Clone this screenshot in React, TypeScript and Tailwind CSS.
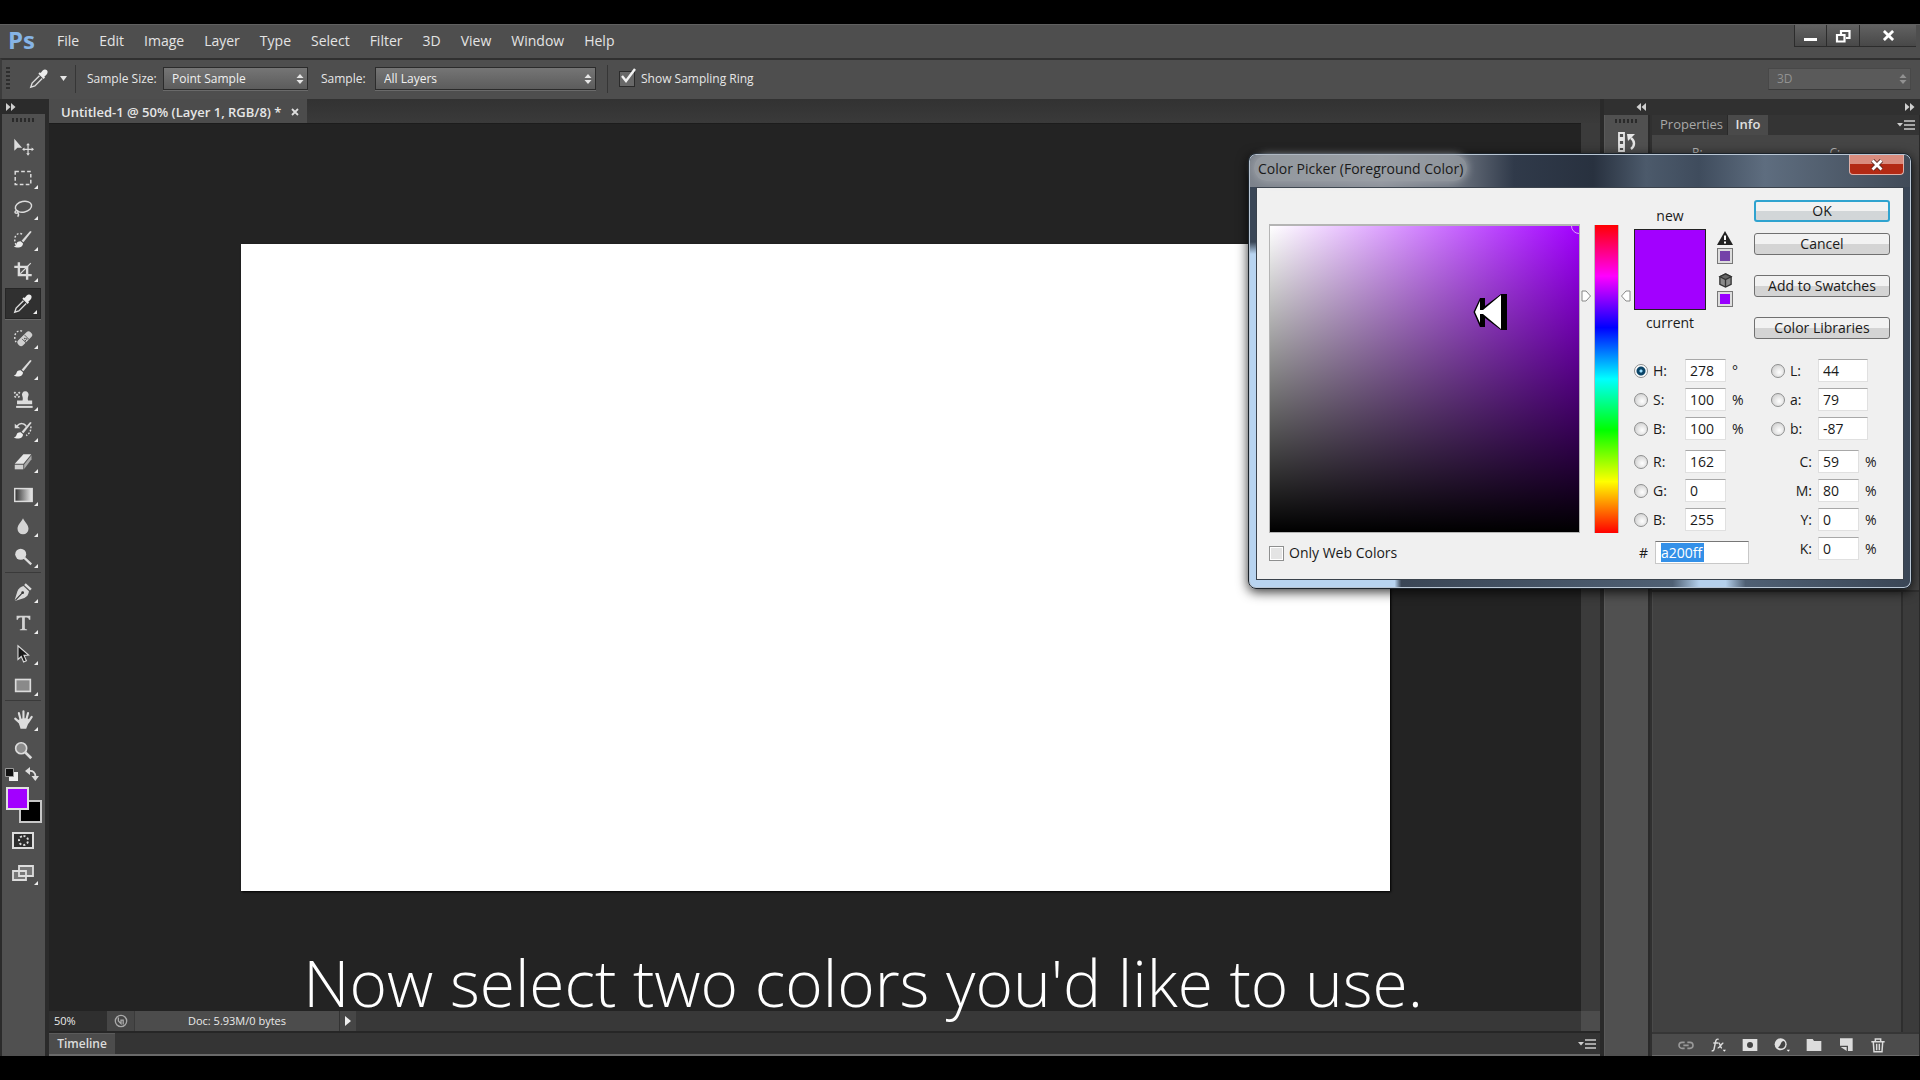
import React from "react";

const UI = "font-['Open_Sans','Noto_Sans',sans-serif]";

const MENUS = ["File", "Edit", "Image", "Layer", "Type", "Select", "Filter", "3D", "View", "Window", "Help"];

type IconProps = { children: React.ReactNode; size?: string };

function Icon({ children, size = "size-6" }: IconProps) {
  return (
    <svg viewBox="0 0 24 24" className={`${size} shrink-0`} fill="none" stroke="#dcdcdc" strokeWidth="1.6" aria-hidden="true">
      {children}
    </svg>
  );
}

const eyedropper = (
  <>
    <path d="M12.5 8.5 4.5 16.500 3 21l4.500-1.500L15.500 11.500" strokeWidth="1.500" />
    <path d="M16 2.800c1.600-1.600 3.600-1.300 4.600-.3s1.200 2.900-.3 4.500L17.800 9.500l.8.9-1.600 1.600L11.300 6.300l1.600-1.600.9.8z" fill="#ececec" stroke="none" />
  </>
);

const brushTip = (
  <>
    <path d="M21.500 3 12.500 14.500 10.500 12.800 19.800 2.300z" fill="#dcdcdc" stroke="none" />
    <path d="M9.700 13.500 11.900 15.600c.4 3-2.400 4.700-5.400 4.700-1.900 0-3.300-.6-4.500-1.300 2.400-.4 2.400-1.600 3.200-3.500.7-1.600 2.700-2.400 4.500-2z" fill="#ececec" stroke="none" />
  </>
);

type Tool = { name: string; icon: React.ReactNode; flyout?: boolean; active?: boolean; rule?: boolean; drop?: boolean };

const TOOLS: Tool[] = [
  {
    name: "Move tool",
    icon: (
      <>
        <path d="M2.500 3v13l3.400-3.200h5.100z" fill="#dcdcdc" stroke="none" />
        <path d="M17.500 9v11M12 14.500h11" strokeWidth="1.300" />
        <path d="m17.500 7.500 2 2.600h-4zM17.500 21.500l2-2.600h-4zM11 14.500l2.600-2v4zM24 14.500l-2.600-2v4z" fill="#dcdcdc" stroke="none" />
      </>
    ),
  },
  { name: "Rectangular marquee tool", flyout: true, icon: <rect x="3.500" y="5" width="17" height="14" strokeDasharray="4 2.500" /> },
  {
    name: "Lasso tool",
    flyout: true,
    icon: (
      <>
        <ellipse cx="12.500" cy="9.500" rx="9" ry="5.800" transform="rotate(-12 12.500 9.500)" />
        <path d="M5 13.500c-2 .8-2.300 2.800-.5 3 2 .2 3-1.700 1-3M6.500 16c1 1.500.8 3-.3 4.500" />
      </>
    ),
  },
  {
    name: "Quick selection tool",
    flyout: true,
    icon: (
      <>
        <path d="M11 5.500C7 3.500 3 6.500 3 11.500c0 3 1 5 2 6.500" strokeDasharray="2 2" />
        <g>{brushTip}</g>
      </>
    ),
  },
  {
    name: "Crop tool",
    flyout: true,
    icon: (
      <>
        <path d="M7.500 2.500v14h14M2.500 7.500h14v14" strokeWidth="2.600" />
        <path d="M9 15 20.500 3.500" strokeWidth="1.200" />
      </>
    ),
  },
  { name: "Eyedropper tool", flyout: true, active: true, icon: eyedropper },
  {
    name: "Spot healing brush tool",
    flyout: true,
    icon: (
      <>
        <path d="M11 4.500C7 3 3 6 3 11c0 2 .5 4 1.500 5.500" strokeDasharray="2 2" />
        <rect x="4.500" y="9" width="19" height="7.500" rx="3.200" transform="rotate(-45 14 12.800)" fill="#cfcfcf" stroke="none" />
        <path d="m11 13 5 5M13.500 8.500l5.500 5.500" stroke="#555" strokeWidth="1" />
        <path d="M14 12.500h.1M16 13h.1M14.500 15h.1" stroke="#444" strokeWidth="1.600" strokeLinecap="round" />
      </>
    ),
  },
  { name: "Brush tool", flyout: true, icon: brushTip },
  {
    name: "Clone stamp tool",
    flyout: true,
    icon: (
      <>
        <path d="M14.500 2.500a3.600 3.600 0 0 1 3.400 4.900c-.8 1.700-.9 3.600-.4 5.100h4.500v4H5.500v-4h6c.5-1.500.4-3.400-.4-5.100A3.600 3.600 0 0 1 14.500 2.500z" fill="#dcdcdc" stroke="none" />
        <path d="M4.500 19.500h18" strokeWidth="2.200" />
        <path d="m2.500 3.500 6 6M8.500 3.500l-6 6" strokeDasharray="1.800 1.300" strokeWidth="2" />
      </>
    ),
  },
  {
    name: "History brush tool",
    flyout: true,
    icon: (
      <>
        <path d="M5.500 6.500c3-3.500 8-3.500 10 .5" />
        <path d="M3 4v5h6z" fill="#dcdcdc" stroke="none" />
        <path d="M20.500 7c.7 4-1.500 8-5 10" strokeDasharray="2 1.500" />
        {brushTip}
      </>
    ),
  },
  {
    name: "Eraser tool",
    flyout: true,
    icon: (
      <>
        <path d="m3 14 9.500-10.500H21L12.500 14z" fill="#e6e6e6" stroke="none" />
        <path d="M3 15h9.300v5H3z" fill="#cfcfcf" stroke="none" />
        <path d="m13.300 14.600 8-10V9l-8 10.500z" fill="#a8a8a8" stroke="none" />
      </>
    ),
  },
  {
    name: "Gradient tool",
    flyout: true,
    drop: true,
    icon: (
      <>
        <defs>
          <linearGradient id="tool-gradient">
            <stop stopColor="#2e2e2e" />
            <stop offset="1" stopColor="#eee" />
          </linearGradient>
        </defs>
        <rect x="3" y="5" width="19" height="14" fill="url(#tool-gradient)" />
      </>
    ),
  },
  { name: "Blur tool", flyout: true, icon: <path d="M12 3.500c1.500 3.500 6 7 6 11.500a6 6 0 0 1-12 0c0-4.500 4.500-8 6-11.500z" fill="#d4d4d4" stroke="none" /> },
  {
    name: "Dodge tool",
    flyout: true,
    icon: (
      <>
        <circle cx="9.500" cy="9" r="6" fill="#dcdcdc" stroke="none" />
        <path d="m13.500 13 7.500 7" strokeWidth="2.400" />
      </>
    ),
  },
  {
    name: "Pen tool",
    flyout: true,
    rule: true,
    icon: (
      <>
        <path d="m15 2.500 6.500 6-1.800 1.800-6.500-6z" fill="#dcdcdc" stroke="none" />
        <path d="m12.500 5.500 6 5.600c-.3 3-2 5.900-5 7.400L4 21.500 3 20.500 6 11c1.300-3 3.500-4.900 6.500-5.500z" fill="#d8d8d8" stroke="none" />
        <path d="m3.800 20.800 7-7.300" stroke="#333" strokeWidth="1.200" />
        <circle cx="11.600" cy="12.700" r="1.500" fill="#333" stroke="none" />
      </>
    ),
  },
  {
    name: "Type tool",
    flyout: true,
    icon: <path d="M5 4h15v4.500h-1.500C18.200 6.500 17.500 6 14 6v11.500c0 1.200.8 1.500 2.500 1.500v1h-8v-1c1.700 0 2.500-.3 2.500-1.500V6C7.500 6 6.800 6.500 6.500 8.500H5z" fill="#d4d4d4" stroke="none" />,
  },
  {
    name: "Path selection tool",
    flyout: true,
    icon: <path d="M6.500 3v15l3.600-3.300 2.600 6 3-1.300-2.600-5.900 5-.3z" fill="#191919" strokeWidth="1.200" />,
  },
  { name: "Rectangle tool", flyout: true, icon: <rect x="4" y="6" width="16" height="13" fill="#8a8a8a" strokeWidth="1.800" /> },
  {
    name: "Hand tool",
    flyout: true,
    rule: true,
    icon: (
      <>
        <path d="M7.500 14 3.500 10.500M9.500 12 7.500 4.500M12.500 11V2.500M15.500 12l2-7.500M17.500 14.500l4-6" strokeWidth="2.300" strokeLinecap="round" />
        <path d="M6 12.500c2-2 9-3.500 12.500-1.500-.3 4.500-1.500 7-3 10.500H9.300C8.600 18 7 15 6 12.500z" fill="#dcdcdc" stroke="none" />
      </>
    ),
  },
  {
    name: "Zoom tool",
    icon: (
      <>
        <circle cx="10" cy="9" r="6" fill="#8b8b8b" strokeWidth="1.800" />
        <path d="m14.500 13.500 6.500 6.500" strokeWidth="3" />
      </>
    ),
  },
];

function UpDown({ className = "fill-[#e6e6e6]" }: { className?: string }) {
  return (
    <svg viewBox="0 0 8 12" className={`pointer-events-none absolute top-1/2 right-1 h-3 w-2 -translate-y-1/2 ${className}`} aria-hidden="true">
      <path d="M4 1 7.500 5h-7zM4 11 .5 7h7z" />
    </svg>
  );
}

function Grip() {
  return <div className="h-1 w-6 bg-[repeating-linear-gradient(90deg,#2a2a2a_0_2px,#4f4f4f_2px_4px)]" />;
}

function Chevrons({ left = false }: { left?: boolean }) {
  return (
    <svg viewBox="0 0 10 8" className={left ? "h-2 w-2.5 rotate-180 fill-[#d0d0d0]" : "h-2 w-2.5 fill-[#d0d0d0]"} aria-hidden="true">
      <path d="M0 0l4.500 4L0 8zM5 0l4.500 4L5 8z" />
    </svg>
  );
}

function PanelMenu() {
  return (
    <svg viewBox="0 0 18 12" className="h-3 w-[18px]" aria-hidden="true">
      <path d="M0 4h6L3 7.500z" fill="#ccc" />
      <path d="M7 2h11M7 6h11M7 10h11" stroke="#ccc" strokeWidth="1.500" />
    </svg>
  );
}

function MenuBar() {
  return (
    <header className="flex h-[34px] items-stretch border-t border-[#606060] bg-[#4e4e4e] text-sm text-[#e4e4e4]">
      <span className="flex w-[47px] items-center pb-1 pl-2 text-2xl leading-none font-bold text-[#86b4e6]">Ps</span>
      <nav className="flex items-center pb-0.5">
        {MENUS.map((m) => (
          <button key={m} type="button" className="px-[10px] leading-5">
            {m}
          </button>
        ))}
      </nav>
      <div className="mr-1 ml-auto flex h-[22px] border-b border-l border-[#2c2c2c] bg-gradient-to-b from-[#626262] to-[#484848]">
        <button type="button" aria-label="Minimize" className="flex w-8 justify-center border-r border-[#2c2c2c]">
          <span className="mt-[13px] h-[3px] w-[13px] bg-white" />
        </button>
        <button type="button" aria-label="Restore" className="flex w-[33px] items-center justify-center border-r border-[#2c2c2c]">
          <svg viewBox="0 0 16 14" className="h-[14px] w-4" fill="none" stroke="#fff" strokeWidth="2.200" aria-hidden="true">
            <path d="M6 5V2h8.500v7H11" />
            <path d="M2 6h7.500v6.500H2z" />
          </svg>
        </button>
        <button type="button" aria-label="Close" className="flex w-[56px] items-center justify-center">
          <svg viewBox="0 0 14 12" className="h-[11px] w-[13px]" stroke="#fff" strokeWidth="3" aria-hidden="true">
            <path d="m2 1 10 10M12 1 2 11" />
          </svg>
        </button>
      </div>
    </header>
  );
}

const selectBox =
  "h-[23px] w-full appearance-none border border-[#2b2b2b] bg-gradient-to-b from-[#757575] to-[#5c5c5c] pl-2 text-xs text-[#f0f0f0] shadow-[0_1px_0_#6a6a6a]";

function OptionsBar() {
  return (
    <div className="flex h-[41px] items-center border-t-2 border-l-2 border-t-[#303030] border-l-[#3c3c3c] bg-[#4e4e4e] pb-0.5 text-xs text-[#e6e6e6]">
      <div className="ml-1 h-6 w-1 bg-[repeating-linear-gradient(180deg,#2e2e2e_0_2px,#4f4f4f_2px_4px)]" />
      <button type="button" aria-label="Eyedropper presets" className="ml-[18px] flex items-center gap-[10px]">
        <Icon size="size-[22px]">{eyedropper}</Icon>
        <svg viewBox="0 0 7 5" className="h-[5px] w-[7px] fill-[#e6e6e6]" aria-hidden="true">
          <path d="M0 0h7L3.500 5z" />
        </svg>
      </button>
      <div className="mx-2 h-7 w-px bg-[#363636]" />
      <label htmlFor="sample-size" className="ml-[3px] w-[76px]">
        Sample Size:
      </label>
      <div className="relative w-[145px]">
        <select id="sample-size" className={selectBox}>
          <option>Point Sample</option>
        </select>
        <UpDown />
      </div>
      <label htmlFor="sample-layers" className="ml-[13px] w-[54px]">
        Sample:
      </label>
      <div className="relative w-[221px]">
        <select id="sample-layers" className={selectBox}>
          <option>All Layers</option>
        </select>
        <UpDown />
      </div>
      <div className="mx-[11px] h-7 w-px bg-[#363636]" />
      <label className="flex items-center gap-[6px]">
        <span className="relative flex size-4">
          <input type="checkbox" defaultChecked className="size-4 appearance-none border border-[#2b2b2b] bg-[#686868]" />
          <svg viewBox="0 0 18 18" className="pointer-events-none absolute -top-1 left-0 size-[18px]" fill="none" stroke="#f2f2f2" strokeWidth="2.400" aria-hidden="true">
            <path d="m3 9 4 5 9-12" />
          </svg>
        </span>
        Show Sampling Ring
      </label>
      <div className="relative mr-[9px] ml-auto w-[143px]">
        <select aria-label="Workspace" disabled className="h-[22px] w-full appearance-none border border-[#484848] border-b-[#3a3a3a] bg-[#5a5a5a] pl-2 text-xs text-[#929292] opacity-100">
          <option>3D</option>
        </select>
        <UpDown className="fill-[#929292]" />
      </div>
    </div>
  );
}

function ToolBar() {
  return (
    <aside className="flex w-[49px] shrink-0 flex-col border-r-4 border-l-2 border-r-[#2b2b2b] border-l-[#2b2b2b] bg-[#505050]">
      <div className="flex h-[15px] items-center bg-[#2b2b2b] pl-1">
        <Chevrons />
      </div>
      <div className="flex justify-center pt-1 pb-[9px]">
        <Grip />
      </div>
      <div className="flex flex-col pr-1 pl-[3px]">
        {TOOLS.map((t) => (
          <React.Fragment key={t.name}>
            {t.rule && <div className="mb-[3px] h-px bg-[#3a3a3a]" />}
            <button
              type="button"
              aria-label={t.name}
              aria-pressed={!!t.active}
              className={
                t.active
                  ? "relative mt-0.5 mb-[3px] flex h-[31px] items-center justify-center border border-[#262626] bg-[#303030] shadow-[0_1px_0_#6a6a6a]"
                  : t.drop
                    ? "relative mt-0.5 flex h-[31px] items-center justify-center"
                    : "relative flex h-[31px] items-center justify-center"
              }
            >
              <Icon size="size-[22px]">{t.icon}</Icon>
              {t.flyout && (
                <svg viewBox="0 0 4 4" className="absolute right-[3px] bottom-1 size-1 fill-[#eee]" aria-hidden="true">
                  <path d="M4 0v4H0z" />
                </svg>
              )}
            </button>
          </React.Fragment>
        ))}
      </div>
      <div className="mt-px flex items-center justify-between px-[3px] pr-[6px]">
        <button type="button" aria-label="Default colors" className="flex">
          <svg viewBox="0 0 13 13" className="size-[13px]" aria-hidden="true">
            <path d="M4 4h9v9H4z" fill="#eee" />
            <path d="M.5.500h8v8h-8z" fill="#111" stroke="#999" />
          </svg>
        </button>
        <button type="button" aria-label="Switch colors" className="flex">
          <svg viewBox="0 0 14 14" className="size-[14px]" fill="none" stroke="#ddd" strokeWidth="1.800" aria-hidden="true">
            <path d="M4 4c4-.5 6.500 1.500 6.500 6" />
            <path d="M5 0v8L0 4zM6.500 9h7.500l-3.700 5z" fill="#ddd" stroke="none" />
          </svg>
        </button>
      </div>
      <div className="relative mt-[6px] ml-1 h-9 w-9">
        <button type="button" aria-label="Background color" className="absolute right-0 bottom-0 size-[23px] border-2 border-[#c8c8c8] bg-black" />
        <button type="button" aria-label="Foreground color" className="absolute top-0 left-0 size-[23px] border-2 border-[#e0e0e0] bg-[#a200ff]" />
      </div>
      <button type="button" aria-label="Quick mask mode" className="mt-[9px] ml-[10px] flex h-[17px] w-[22px] items-center justify-center border-2 border-[#ddd] bg-[#2e2e2e]">
        <span className="size-[11px] rounded-full border-2 border-dotted border-[#ddd]" />
      </button>
      <button type="button" aria-label="Screen mode" className="relative mt-[13px] ml-[10px] flex h-6 w-[26px]">
        <svg viewBox="0 0 26 24" className="h-6 w-[26px]" fill="#777" stroke="#ddd" strokeWidth="1.800" aria-hidden="true">
          <path d="M1 9h13v9H1zM7 4h14v10H7z" />
          <path d="M26 19v4h-4z" fill="#eee" stroke="none" />
        </svg>
      </button>
    </aside>
  );
}

function DocumentArea() {
  return (
    <main className="flex min-w-0 flex-1 flex-col">
      <div className="flex h-6 bg-gradient-to-b from-[#323232] to-[#3a3a3a]">
        <div className="flex items-center gap-[10px] bg-[#4c4c4c] pt-0.5 pr-2 pl-3 text-[13px] leading-none font-semibold text-[#e6e6e6]">
          <span>Untitled-1 @ 50% (Layer 1, RGB/8) *</span>
          <button type="button" aria-label="Close document" className="flex">
            <svg viewBox="0 0 8 8" className="size-2" stroke="#ddd" strokeWidth="1.800" aria-hidden="true">
              <path d="m1 1 6 6M7 1 1 7" />
            </svg>
          </button>
        </div>
      </div>
      <div className="flex flex-1">
        <div className="flex flex-1 items-center justify-center border-t border-[#1c1c1c] bg-[#232323]">
          <div className="aspect-video w-3/4 bg-white shadow-[1px_1px_2px_#000]" />
        </div>
        <div className="w-[19px] bg-[#3b3b3b]" />
      </div>
      <div className="flex h-5 items-stretch bg-[#383838] text-[11px] text-[#eaeaea]">
        <div className="flex w-[58px] items-center bg-[#2f2f2f] pl-[5px]">50%</div>
        <div className="flex w-7 items-center justify-center border-r border-[#3a3a3a] bg-[#464646]">
          <svg viewBox="0 0 16 16" className="size-[14px]" fill="none" stroke="#aaa" strokeWidth="1.500" aria-hidden="true">
            <circle cx="8" cy="8" r="6.500" />
            <path d="M5 4v4l3 3V7h2.500v5" />
          </svg>
        </div>
        <div className="flex w-[205px] items-center justify-center border-r border-[#333] bg-[#4c4c4c]">Doc: 5.93M/0 bytes</div>
        <button type="button" aria-label="Status menu" className="flex w-4 items-center justify-center bg-[#464646]">
          <svg viewBox="0 0 6 10" className="h-[10px] w-[6px] fill-[#eee]" aria-hidden="true">
            <path d="M0 0v10l6-5z" />
          </svg>
        </button>
        <div className="ml-auto w-[19px] bg-[#4c4c4c]" />
      </div>
      <div className="flex h-[25px] items-stretch border-t-2 border-b-2 border-t-[#262626] border-b-[#6a6a6a] bg-[#343434]">
        <div className="flex w-[66px] items-center justify-center border-t border-[#5a5a5a] bg-[#4c4c4c] text-xs font-semibold text-[#dcdcdc]">Timeline</div>
        <button type="button" aria-label="Timeline menu" className="mr-1 ml-auto flex items-center">
          <PanelMenu />
        </button>
      </div>
    </main>
  );
}

const LAYER_ACTIONS: { name: string; icon: React.ReactNode }[] = [
  {
    name: "Link layers",
    icon: <path d="M10 17H6a4.500 4.500 0 0 1 0-9h4M14 8h4a4.500 4.500 0 0 1 0 9h-4M8 12.500h8" stroke="#999" strokeWidth="2.400" />,
  },
  {
    name: "Layer style",
    icon: (
      <>
        <path d="M13 3.500c-3-1-4 .5-4.500 3L6 18.500c-.4 1.800-1.500 2.500-3.500 2M5 9h7M12.500 9c2 0 2 .8 2.700 3.500.8 3 1 4 2.800 4.200M20 9c-3 .5-5 7.700-8.500 7.700" strokeWidth="2.200" />
        <path d="M19 19h5l-2.500 3z" fill="#eee" stroke="none" />
      </>
    ),
  },
  {
    name: "Layer mask",
    icon: (
      <>
        <path d="M1 3h22v18H1z" fill="#e0e0e0" stroke="none" />
        <circle cx="12" cy="12" r="4.500" fill="#444" stroke="none" />
      </>
    ),
  },
  {
    name: "Adjustment layer",
    icon: (
      <>
        <circle cx="10" cy="11" r="9" fill="#e0e0e0" stroke="none" />
        <path d="M15 6c-6 0-3 6-9 9.500A6 6 0 0 0 15 6z" fill="#444" stroke="none" />
        <path d="M19 19h5l-2.500 3z" fill="#eee" stroke="none" />
      </>
    ),
  },
  { name: "New group", icon: <path d="M1 3h9l2 3h11v15H1z" fill="#dcdcdc" stroke="none" /> },
  { name: "New layer", icon: <path d="M3 2h19v19h-7v-8H3z M4 15h9v6z" fill="#dcdcdc" stroke="none" /> },
  {
    name: "Delete layer",
    icon: <path d="M2 7h20M8 6V3h8v3M5 8l1 14h12l1-14M10 10v10M14 10v10" strokeWidth="2.200" />,
  },
];

function Dock() {
  return (
    <div className="flex w-80 shrink-0 flex-col border-l-4 border-l-[#2a2a2a]">
      <div className="flex h-4 items-center justify-between bg-[#303030] pr-[5px] pl-8">
        <Chevrons left />
        <Chevrons />
      </div>
      <div className="flex flex-1">
        <div className="flex w-[46px] flex-col items-center border-r-2 border-l border-r-[#2a2a2a] border-l-[#5a5a5a] bg-[#505050] pt-1">
          <Grip />
          <button type="button" aria-label="History" className="mt-[9px] flex">
            <svg viewBox="0 0 18 20" className="h-5 w-[18px]" fill="none" stroke="#e6e6e6" strokeWidth="1.800" aria-hidden="true">
              <path d="M1 1h5v5H1zM1 8h5v5H1zM1 15h5v4H1z" />
              <path d="M13 6c4 3 4 8 0 11" strokeWidth="2.400" />
              <path d="M9 2h8l-7 7z" fill="#e6e6e6" stroke="none" />
            </svg>
          </button>
        </div>
        <div className="flex min-w-0 flex-1 flex-col border-r border-l-2 border-r-[#2a2a2a] border-l-[#303030]">
          <div className="flex h-5 items-stretch bg-[#343434] text-[13px]">
            <button type="button" className="w-[76px] border-r border-[#2a2a2a] pl-1 text-[#a8a8a8]">
              Properties
            </button>
            <button type="button" className="w-10 bg-[#4a4a4a] font-semibold text-[#e0e0e0]">
              Info
            </button>
            <button type="button" aria-label="Panel menu" className="mr-1 ml-auto flex items-center">
              <PanelMenu />
            </button>
          </div>
          <div className="flex h-[457px] border-b-2 border-[#303030] bg-[#454545] text-xs text-[#b4b4b4]">
            <span className="w-1/2 pt-[10px] pl-10">R:</span>
            <span className="w-1/2 pt-[10px] pl-11">C:</span>
          </div>
          <div className="flex flex-1">
            <div className="flex-1 border-l border-[#4a4a4a] bg-[#414141]" />
            <div className="w-[18px] border-l-2 border-[#2e2e2e] bg-[#3b3b3b]" />
          </div>
          <div className="flex h-[24px] items-center justify-end gap-4 border-t-2 border-b border-t-[#363636] border-b-[#6a6a6a] bg-[#4c4c4c] pr-[33px]">
            {LAYER_ACTIONS.map((a) => (
              <button key={a.name} type="button" aria-label={a.name} className="flex">
                <Icon size="size-4">{a.icon}</Icon>
              </button>
            ))}
          </div>
        </div>
      </div>
    </div>
  );
}

const fieldBox = "h-[23px] border border-[#e0e0e0] border-t-[#a8a8a8] bg-white pl-1 text-sm text-[#1a1a1a] outline-none";

type FieldProps = { id: string; label: string; value: string; unit?: string; radio?: boolean; checked?: boolean; wide?: boolean };

function Field({ id, label, value, unit, radio = true, checked, wide }: FieldProps) {
  return (
    <div className="flex h-[29px] items-center">
      {radio && (
        <input
          type="radio"
          name="channel"
          aria-label={`${label} channel`}
          defaultChecked={checked}
          className="mr-[5px] size-[14px] shrink-0 appearance-none rounded-full border border-[#8e8f8f] bg-[radial-gradient(circle_at_60%_60%,#fff,#c4c4c4)] checked:bg-[radial-gradient(circle,#9fe0ff_0_1px,#0b4568_2px_4px,#fff_5px)]"
        />
      )}
      <label htmlFor={id} className={radio ? (wide ? "w-7" : "w-8") : "w-[47px] pr-[6px] text-right"}>
        {label}:
      </label>
      <input id={id} defaultValue={value} className={`${fieldBox} ${wide ? "w-[50px]" : "w-[41px]"}`} />
      {unit && <span className="ml-[6px]">{unit}</span>}
    </div>
  );
}

function DialogButton({ children, primary }: { children: React.ReactNode; primary?: boolean }) {
  return (
    <button
      type="button"
      className={
        primary
          ? "h-[22px] rounded-[3px] border-2 border-[#2fa3cf] bg-gradient-to-b from-[#f2f2f2] from-50% to-[#d2d6d8] to-50% leading-none"
          : "h-[22px] rounded-[3px] border border-[#707070] bg-gradient-to-b from-[#f2f2f2] from-50% to-[#d4d4d4] to-50% leading-none"
      }
    >
      {children}
    </button>
  );
}

function ColorPicker() {
  return (
    <section
      role="dialog"
      aria-label="Color Picker"
      className="absolute top-[129px] right-2 w-[664px] rounded-lg border border-[#1b232b] bg-[linear-gradient(180deg,#3a4656_88px,transparent_100px),linear-gradient(90deg,#b8d4f0_22%,#3a4656_23%,#4f6074_64%,#b4d0ec_68%,#b4d0ec_72%,#4f6074_75%,#3a4656)] px-[7px] pb-2 text-sm text-[#1a1a1a] shadow-[0_3px_12px_rgba(0,0,0,0.8),inset_0_0_0_1px_#b9c6d4]"
    >
      <div className="-mx-[6px] mt-px flex h-8 items-start justify-between rounded-t-md bg-[linear-gradient(90deg,#7c828b,#8e939b_20%,#747b86_30%,#303a4a_40%,#28313f_52%,#4c5a6b_60%,#3f4c5d_68%,#5e6d7f_78%,#414b58)] pr-[6px] pl-1">
        <h2 className="rounded-full bg-[#a2a6ac]/60 px-1 pt-0.5 leading-6 shadow-[0_0_8px_#a2a6ac]">Color Picker (Foreground Color)</h2>
        <button
          type="button"
          aria-label="Close dialog"
          className="flex h-5 w-[55px] items-center justify-center rounded-b border border-t-0 border-[#e0b0a8] bg-gradient-to-b from-[#d98c7e] from-45% to-[#b32a14] to-50%"
        >
          <svg viewBox="0 0 14 12" className="h-3 w-[14px]" aria-hidden="true">
            <path d="m2.500 1.500 9 9M11.500 1.500l-9 9" stroke="#5a2a22" strokeWidth="4.500" />
            <path d="m2.500 1.500 9 9M11.500 1.500l-9 9" stroke="#fff" strokeWidth="2.800" />
          </svg>
        </button>
      </div>
      <div className="flex border border-[#3a424c] bg-[#f0f0f0] pb-3 pl-3">
        <div className="pt-[36px]">
          <div className="relative h-[309px] w-[311px] overflow-hidden border border-t-2 border-[#b4b4b4] bg-[linear-gradient(0deg,#000,transparent),linear-gradient(90deg,#fff,#a200ff)]">
            <span className="absolute -top-2 -right-2 size-4 rounded-full border border-[#e29cff]" />
            <svg viewBox="0 0 36 38" className="absolute top-[67px] left-[203px] h-[38px] w-9" aria-hidden="true">
              <path d="M.5 19 7 5h5v8L28 1h6v36h-6L12 25v9H7z" fill="#000" />
              <path d="M2 19 7 8v9h3L28 2v34L10 21H7v9z" fill="#fff" />
            </svg>
          </div>
          <label className="mt-2 flex items-center gap-[5px] leading-6">
            <input type="checkbox" className="size-[15px] appearance-none border border-[#8e8f8f] bg-[#e4e4e4] shadow-[inset_0_0_0_1px_#fff]" />
            Only Web Colors
          </label>
        </div>
        <div className="mt-[37px] flex h-[308px]">
          <svg viewBox="0 0 10 12" className="mt-[65px] mr-[3px] ml-px h-3 w-[10px]" fill="#fff" stroke="#888" aria-hidden="true">
            <path d="M1 1h4l4.500 5L5 11H1z" />
          </svg>
          <div className="w-[25px] border-x border-[#bbb] bg-[linear-gradient(180deg,#f00,#f0f_16.600%,#00f_33.300%,#0ff_50%,#0f0_66.600%,#ff0_83.300%,#f00)]" />
          <svg viewBox="0 0 10 12" className="mt-[65px] ml-[2px] h-3 w-[10px]" fill="#fff" stroke="#888" aria-hidden="true">
            <path d="M9 1H5L.5 6 5 11h4z" />
          </svg>
        </div>
        <div className="ml-[3px] flex-1 pt-3">
          <div className="flex h-[156px]">
            <div className="flex w-[72px] flex-col items-center pt-[6px] leading-5">
              <span>new</span>
              <span className="my-[3px] h-[81px] w-full border border-[#222] bg-[#a200ff]" />
              <span>current</span>
            </div>
            <div className="ml-[10px] flex w-[18px] flex-col items-center pt-[31px]">
              <svg viewBox="0 0 16 14" className="h-[14px] w-4" aria-hidden="true">
                <path d="M8 0 16 14H0z" fill="#222" />
                <path d="M8 4.500v4.500M8 10.500v2" stroke="#fff" strokeWidth="2" />
              </svg>
              <button type="button" aria-label="Select in gamut color" className="mt-[3px] size-4 border border-[#777] bg-[#7441a8] shadow-[inset_0_0_0_2px_#ddd]" />
              <svg viewBox="0 0 16 16" className="mt-[9px] size-[15px]" fill="#8a8a8a" stroke="#333" strokeWidth="1.400" aria-hidden="true">
                <path d="m8 1 6 3v8l-6 3-6-3V4z" />
                <path d="m2 4 6 3 6-3-6-3z" fill="#666" />
                <path d="M8 7v8" />
              </svg>
              <button type="button" aria-label="Select web safe color" className="mt-[3px] size-4 border border-[#777] bg-[#9900ff] shadow-[inset_0_0_0_2px_#ddd]" />
            </div>
            <div className="ml-5 flex w-[136px] flex-col">
              <DialogButton primary>OK</DialogButton>
              <div className="mt-[11px] flex flex-col gap-5">
                <DialogButton>Cancel</DialogButton>
                <DialogButton>Add to Swatches</DialogButton>
                <DialogButton>Color Libraries</DialogButton>
              </div>
            </div>
          </div>
          <div className="flex">
            <div className="w-[137px]">
              <Field id="hue" label="H" value="278" unit="°" checked />
              <Field id="sat" label="S" value="100" unit="%" />
              <Field id="bri" label="B" value="100" unit="%" />
              <div className="mt-1">
                <Field id="red" label="R" value="162" />
                <Field id="green" label="G" value="0" />
                <Field id="blue" label="B" value="255" />
              </div>
              <div className="mt-1 flex h-[29px] items-center">
                <label htmlFor="hex" className="w-[21px] pl-[5px]">
                  #
                </label>
                <div className="flex h-[23px] w-[94px] items-center border border-[#c8c8c8] border-t-[#777] bg-white pl-[5px]">
                  <input id="hex" defaultValue="a200ff" className="h-[19px] w-[43px] bg-[#3390e8] text-sm text-white outline-none" />
                </div>
              </div>
            </div>
            <div>
              <Field id="lab-l" label="L" value="44" wide />
              <Field id="lab-a" label="a" value="79" wide />
              <Field id="lab-b" label="b" value="-87" wide />
              <div className="mt-1">
                <Field id="cyan" label="C" value="59" unit="%" radio={false} />
                <Field id="magenta" label="M" value="80" unit="%" radio={false} />
                <Field id="yellow" label="Y" value="0" unit="%" radio={false} />
                <Field id="black" label="K" value="0" unit="%" radio={false} />
              </div>
            </div>
          </div>
        </div>
      </div>
    </section>
  );
}

export default function App() {
  return (
    <div className={`relative flex min-h-screen flex-col border-y-[24px] border-black bg-[#2a2a2a] ${UI}`}>
      <MenuBar />
      <OptionsBar />
      <div className="flex flex-1">
        <ToolBar />
        <DocumentArea />
        <Dock />
      </div>
      <ColorPicker />
      <p className="absolute bottom-7 left-[15.8%] text-[64px] leading-[90px] font-light whitespace-nowrap text-white">Now select two colors you'd like to use.</p>
    </div>
  );
}
